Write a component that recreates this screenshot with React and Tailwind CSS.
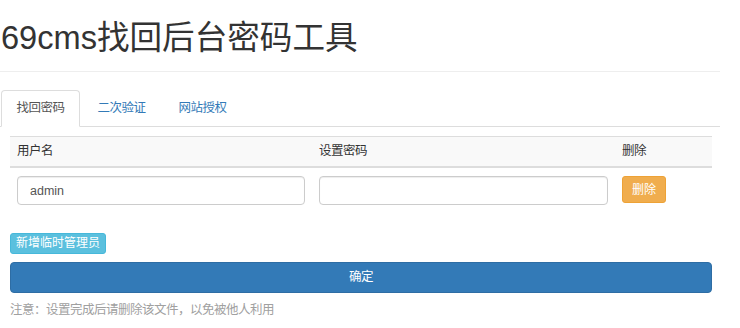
// App.jsx
// 69cms password recovery tool: tabs + admin table + actions.

import React, { useState } from "react";

const tabs = ["找回密码", "二次验证", "网站授权"];

const App = () => {
  const [active, setActive] = useState(0);
  const [rows, setRows] = useState([{ user: "admin", pass: "" }]);

  const updateRow = (i, key, value) => {
    setRows(rows.map((r, j) => (j === i ? { ...r, [key]: value } : r)));
  };

  return (
    <div
      className="h-[328px] w-[740px] overflow-hidden bg-white text-[12.5px] tracking-[-0.5px] text-[#333]"
      style={{ fontFamily: '"Liberation Sans", "Noto Sans CJK SC", sans-serif' }}
    >
      <div className="w-[720px]">
        {/* Page title */}
        <h1 className="pl-[1px] pt-[20px] pb-[15px] text-[32.6px] leading-[36px] font-normal tracking-normal text-[#333]">
          69cms找回后台密码工具
        </h1>
        <div className="border-b border-[#eee]" />

        {/* Tabs */}
        <ul className="mt-[18px] flex border-b border-[#ddd] pl-[1px]">
          {tabs.map((t, i) => (
            <li key={t} className="-mb-px mr-[2px]">
              <button
                type="button"
                onClick={() => setActive(i)}
                className={`block h-[37px] rounded-t-[4px] border px-[14.5px] leading-[35px] ${
                  active === i
                    ? "border-[#ddd] border-b-white bg-white text-[#555]"
                    : "border-transparent text-[#337ab7]"
                }`}
              >
                {t}
              </button>
            </li>
          ))}
        </ul>
      </div>

      {/* Admin table */}
      <div className="pl-[10px] pr-[28px] pt-[9px]">
        <div className="border-t border-[#ddd]">
          <div className="grid grid-cols-[302px_303px_97px] border-b-2 border-[#ddd] bg-[#f9f9f9] leading-[29px]">
            <div className="px-[7px]">用户名</div>
            <div className="px-[7px]">设置密码</div>
            <div className="px-[7px]">删除</div>
          </div>
          {rows.map((r, i) => (
            <div
              key={i}
              className="grid grid-cols-[302px_303px_97px] items-start pt-[8px] pb-[7px]"
            >
              <div className="px-[7px]">
                <input
                  value={r.user}
                  onChange={(e) => updateRow(i, "user", e.target.value)}
                  className="h-[29px] w-full rounded-[4px] border border-[#ccc] px-[12px] text-[12.5px] tracking-normal text-[#555] shadow-[inset_0_1px_1px_rgba(0,0,0,0.075)] outline-none"
                />
              </div>
              <div className="px-[7px]">
                <input
                  type="password"
                  value={r.pass}
                  onChange={(e) => updateRow(i, "pass", e.target.value)}
                  className="h-[29px] w-full rounded-[4px] border border-[#ccc] px-[12px] text-[12.5px] tracking-normal text-[#555] shadow-[inset_0_1px_1px_rgba(0,0,0,0.075)] outline-none"
                />
              </div>
              <div className="px-[7px]">
                <button
                  type="button"
                  onClick={() => setRows(rows.filter((_, j) => j !== i))}
                  className="h-[27px] w-[44px] rounded-[3px] border border-[#eea236] bg-[#f0ad4e] text-[12px] tracking-normal text-white"
                >
                  删除
                </button>
              </div>
            </div>
          ))}
        </div>

        <button
          type="button"
          onClick={() => setRows([...rows, { user: "", pass: "" }])}
          className="mt-[21px] block h-[21px] rounded-[3px] border border-[#46b8da] bg-[#5bc0de] px-[5px] text-[12px] leading-[19px] tracking-normal text-white"
        >
          新增临时管理员
        </button>

        <button
          type="button"
          className="mt-[8px] block h-[31px] w-full rounded-[4px] border border-[#2e6da4] bg-[#337ab7] text-[12.5px] text-white"
        >
          确定
        </button>

        <p className="mt-[8px] text-[12.5px] leading-[18px] text-[#a0a0a0]">
          注意：设置完成后请删除该文件，以免被他人利用
        </p>
      </div>
    </div>
  );
};

export default App;
